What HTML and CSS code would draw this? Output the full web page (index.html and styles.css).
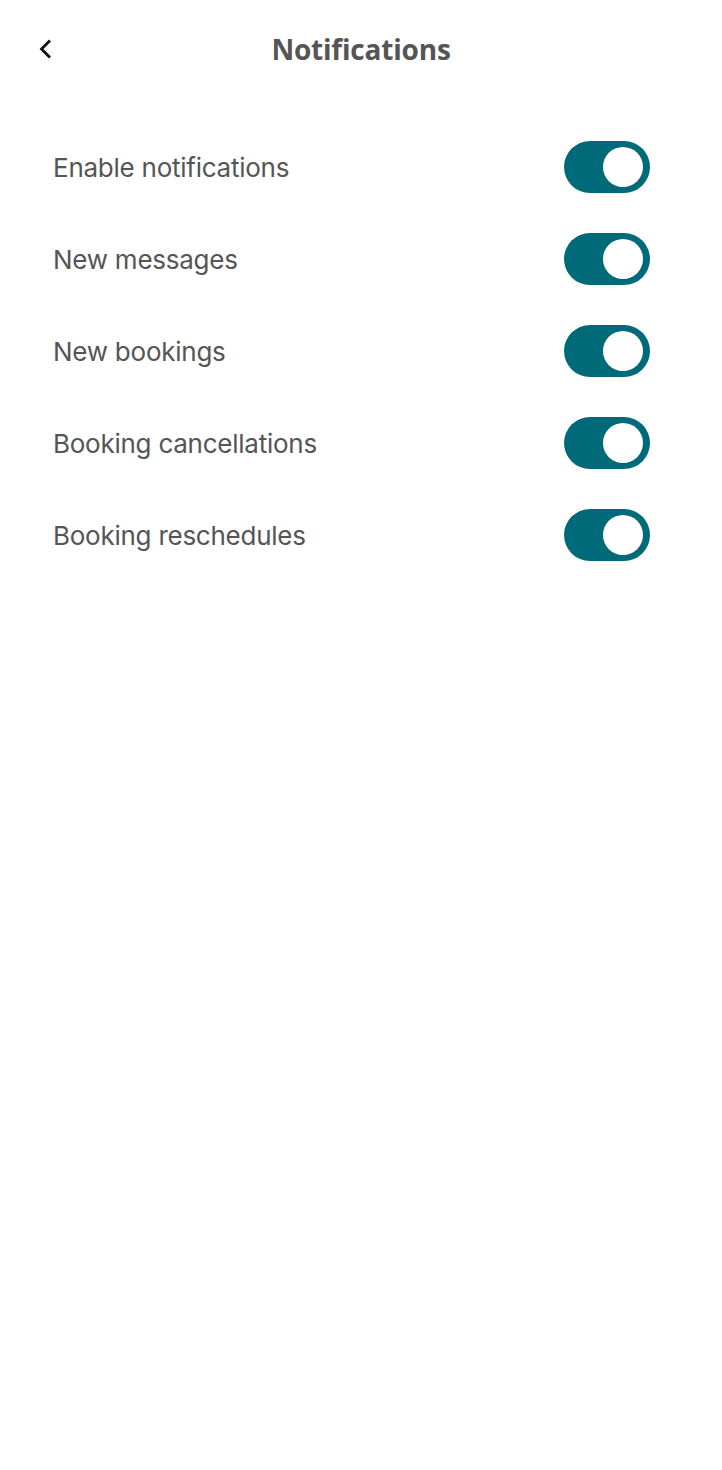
FILE: index.html
```html
<!DOCTYPE html>
<html lang="en">
<head>
<meta charset="utf-8">
<title>Notifications</title>
<link rel="stylesheet" href="styles.css">
</head>
<body>
<div class="screen">
  <header class="header">
    <button class="back" aria-label="Back">
      <svg width="14" height="20" viewBox="0 0 14 20"><path d="M11 2.5 L3.5 10 L11 17.5" fill="none" stroke="#111" stroke-width="2.8" stroke-linecap="square" stroke-linejoin="miter"/></svg>
    </button>
    <h1 class="title">Notifications</h1>
  </header>
  <ul class="list">
    <li class="row"><span class="label">Enable notifications</span><span class="toggle on"><span class="knob"></span></span></li>
    <li class="row"><span class="label">New messages</span><span class="toggle on"><span class="knob"></span></span></li>
    <li class="row"><span class="label">New bookings</span><span class="toggle on"><span class="knob"></span></span></li>
    <li class="row"><span class="label">Booking cancellations</span><span class="toggle on"><span class="knob"></span></span></li>
    <li class="row"><span class="label">Booking reschedules</span><span class="toggle on"><span class="knob"></span></span></li>
  </ul>
</div>
</body>
</html>
```
FILE: styles.css
```css
* { box-sizing: border-box; }
html, body { margin: 0; padding: 0; background: #fff; }
body { font-family: Inter, "Liberation Sans", sans-serif; }
.screen { width: 722px; min-height: 1470px; background: #fff; }
.header {
  height: 98px;
  display: grid;
  grid-template-columns: 1fr auto 1fr;
  align-items: center;
  padding: 0 24px;
}
.back {
  justify-self: start;
  width: 44px; height: 44px;
  display: flex; align-items: center; justify-content: flex-start;
  padding: 0 0 0 14px;
  border: 0; background: none;
}
.back svg { display: block; }
.title {
  margin: 0;
  font-family: "Open Sans", Inter, sans-serif;
  font-weight: 700;
  font-size: 28px;
  color: #555;
  letter-spacing: -0.2px;
}
.list {
  list-style: none;
  margin: 0;
  padding: 43px 72px 0 53px;
  display: flex;
  flex-direction: column;
  gap: 40px;
}
.row {
  height: 52px;
  display: flex;
  align-items: center;
  justify-content: space-between;
}
.label {
  font-size: 26px;
  color: #555;
  letter-spacing: -0.25px;
}
.toggle {
  width: 86px; height: 52px;
  border-radius: 26px;
  background: #006a78;
  display: flex; align-items: center; justify-content: flex-end;
  padding-right: 7px;
}
.knob {
  width: 40px; height: 40px; border-radius: 50%;
  background: #fff;
}
```
